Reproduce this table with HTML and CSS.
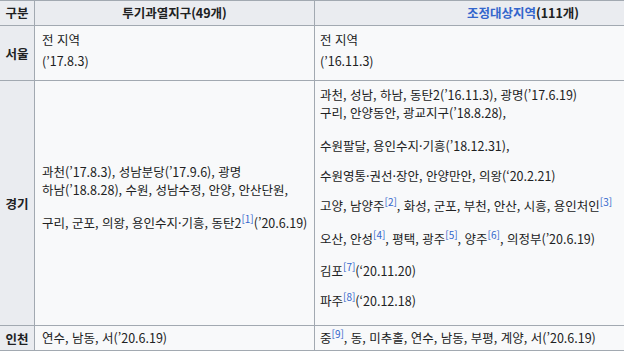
FILE: index.html
```html
<!DOCTYPE html>
<html lang="ko">
<head>
<meta charset="utf-8">
<link rel="stylesheet" href="styles.css">
</head>
<body>
<div class="frame">
<table class="wikitable">
  <colgroup>
    <col class="c1"><col class="c2"><col class="c3">
  </colgroup>
  <tr class="head">
    <th>구분</th>
    <th>투기과열지구(49개)</th>
    <th><a class="link">조정대상지역</a>(111개)</th>
  </tr>
  <tr class="seoul">
    <th>서울</th>
    <td class="mid"><div class="l2">전 지역</div><div class="l2">(’17.8.3)</div></td>
    <td class="right"><div class="l2">전 지역</div><div class="l2">(’16.11.3)</div></td>
  </tr>
  <tr class="gg">
    <th>경기</th>
    <td class="mid gg-mid">
      <div class="ln">과천(’17.8.3), 성남분당(’17.9.6), 광명</div>
      <div class="ln">하남(’18.8.28), 수원, 성남수정, 안양, 안산단원,</div>
      <div class="ln gap">구리, 군포, 의왕, 용인수지·기흥, 동탄2<sup class="ref">[1]</sup>(’20.6.19)</div>
    </td>
    <td class="right gg-right">
      <div class="ln">과천, 성남, 하남, 동탄2(’16.11.3), 광명(’17.6.19)</div>
      <div class="ln">구리, 안양동안, 광교지구(’18.8.28),</div>
      <div class="ln gap">수원팔달, 용인수지·기흥(’18.12.31),</div>
      <div class="ln gap2">수원영통·권선·장안, 안양만안, 의왕(‘20.2.21)</div>
      <div class="ln gap2">고양, 남양주<sup class="ref">[2]</sup>, 화성, 군포, 부천, 안산, 시흥, 용인처인<sup class="ref">[3]</sup></div>
      <div class="ln gap3">오산, 안성<sup class="ref">[4]</sup>, 평택, 광주<sup class="ref">[5]</sup>, 양주<sup class="ref">[6]</sup>, 의정부(’20.6.19)</div>
      <div class="ln gap4">김포<sup class="ref">[7]</sup>(‘20.11.20)</div>
      <div class="ln gap2">파주<sup class="ref">[8]</sup>(‘20.12.18)</div>
    </td>
  </tr>
  <tr class="ic">
    <th>인천</th>
    <td class="mid">연수, 남동, 서(’20.6.19)</td>
    <td class="right">중<sup class="ref">[9]</sup>, 동, 미추홀, 연수, 남동, 부평, 계양, 서(’20.6.19)</td>
  </tr>
</table>
</div>
</body>
</html>
```
FILE: styles.css
```css
html, body {
  margin: 0;
  padding: 0;
  background: #ffffff;
}
body {
  font-family: "Noto Sans CJK KR", "Noto Sans", sans-serif;
  font-size: 12.5px;
  color: #202122;
}
.frame {
  width: 624px;
  height: 353px;
  overflow: hidden;
}
.wikitable {
  border-collapse: collapse;
  table-layout: fixed;
  width: 732px;
  margin: 0 0 0 -1px;
  background: #f8f9fa;
  border: 1px solid #a2a9b1;
}
.c1 { width: 35px; }
.c2 { width: 280px; }
.c3 { width: 417px; }
th, td {
  border: 1px solid #a2a9b1;
  padding: 0;
}
th {
  background: #eaecf0;
  font-weight: bold;
  text-align: center;
  vertical-align: middle;
}
td {
  text-align: left;
  vertical-align: top;
}
.head th { height: 24px; line-height: 24px; }
.link { color: #3366cc; text-decoration: none; }
.mid { padding-left: 7px; }
.right { padding-left: 5px; }
.seoul td { height: 55px; padding-top: 3px; box-sizing: border-box; }
.l2 { line-height: 21px; }
.ln { line-height: 18px; white-space: nowrap; }
.gg td { height: 245px; box-sizing: border-box; }
.gg-mid { padding-top: 82px; }
.gap { margin-top: 15px; }
.gg-right { padding-top: 5px; }
.gap2 { margin-top: 12px; }
.gap3 { margin-top: 15px; }
.gap4 { margin-top: 14px; }
.ic td { height: 24px; line-height: 24px; }
.ref {
  color: #3366cc;
  font-size: 10px;
  line-height: 0;
  vertical-align: 5px;
}
```
